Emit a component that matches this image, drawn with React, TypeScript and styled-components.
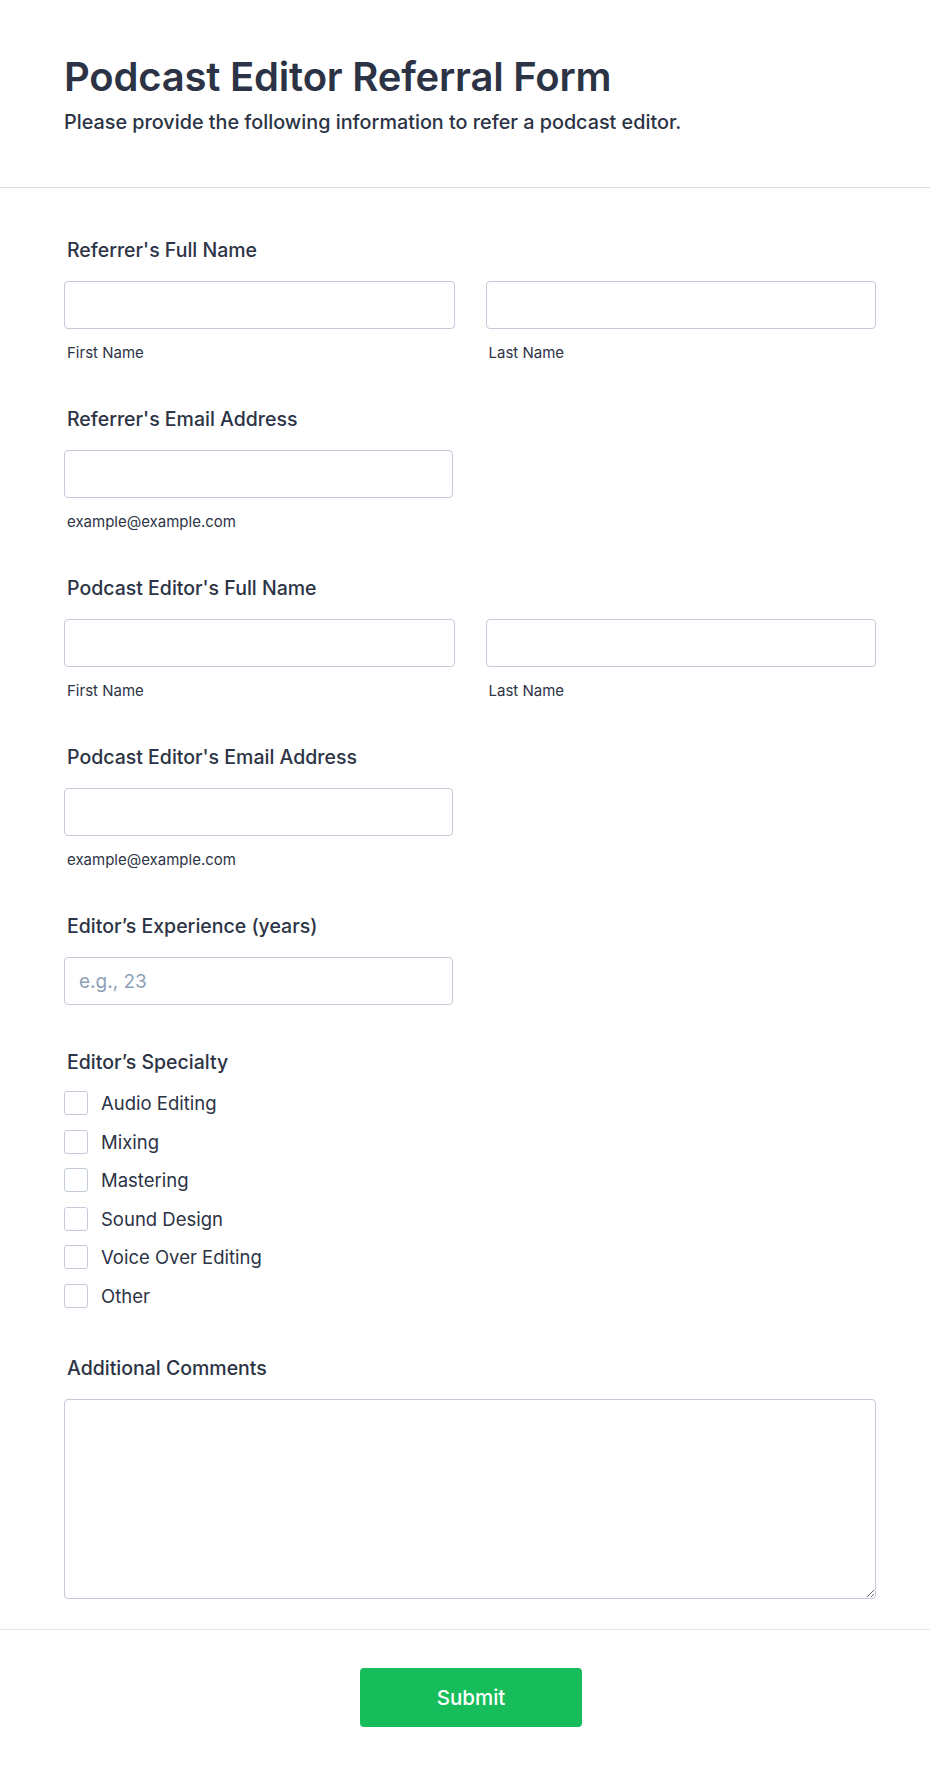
import styled, { createGlobalStyle } from "styled-components";

const GlobalStyle = createGlobalStyle`
	html, body {
		margin: 0;
		padding: 0;
		background: #ffffff;
	}
	body {
		font-family: "Inter", "Noto Sans", sans-serif;
		color: #2c3345;
	}
	* {
		box-sizing: border-box;
	}
`;

const specialties = [
	"Audio Editing",
	"Mixing",
	"Mastering",
	"Sound Design",
	"Voice Over Editing",
	"Other"
];

function App() {
	return (
		<>
			<GlobalStyle />
			<Page>
				<Header>
					<Title>Podcast Editor Referral Form</Title>
					<Subtitle>
						Please provide the following information to refer a podcast editor.
					</Subtitle>
				</Header>

				<Form>
					<Field>
						<Label>Referrer's Full Name</Label>
						<TwoCols>
							<div>
								<Input type="text" />
								<SubLabel>First Name</SubLabel>
							</div>
							<div>
								<Input type="text" />
								<SubLabel>Last Name</SubLabel>
							</div>
						</TwoCols>
					</Field>

					<Field>
						<Label>Referrer's Email Address</Label>
						<HalfBox>
							<Input type="email" />
							<SubLabel>example@example.com</SubLabel>
						</HalfBox>
					</Field>

					<Field>
						<Label>Podcast Editor's Full Name</Label>
						<TwoCols>
							<div>
								<Input type="text" />
								<SubLabel>First Name</SubLabel>
							</div>
							<div>
								<Input type="text" />
								<SubLabel>Last Name</SubLabel>
							</div>
						</TwoCols>
					</Field>

					<Field>
						<Label>Podcast Editor's Email Address</Label>
						<HalfBox>
							<Input type="email" />
							<SubLabel>example@example.com</SubLabel>
						</HalfBox>
					</Field>

					<Field>
						<Label>Editor’s Experience (years)</Label>
						<HalfBox>
							<Input type="text" placeholder="e.g., 23" />
						</HalfBox>
					</Field>

					<Field>
						<Label $gap={17}>Editor’s Specialty</Label>
						<OptionList>
							{specialties.map(item => (
								<Option key={item}>
									<Box type="checkbox" />
									<span>{item}</span>
								</Option>
							))}
						</OptionList>
					</Field>

					<Field>
						<Label>Additional Comments</Label>
						<TextArea />
					</Field>
				</Form>

				<Footer>
					<SubmitButton type="button">Submit</SubmitButton>
				</Footer>
			</Page>
		</>
	);
}

const Page = styled.div`
	width: 930px;
	min-height: 1777px;
	background: #ffffff;
`;

const Header = styled.header`
	padding: 53px 56px 53px 64px;
	border-bottom: 1px solid #dcdce6;
`;

const Title = styled.h1`
	margin: 0 0 9px;
	font-size: 40px;
	font-weight: 600;
	line-height: 48px;
	letter-spacing: -0.2px;
	color: #2c3345;
`;

const Subtitle = styled.p`
	margin: 0;
	font-size: 19.8px;
	font-weight: 500;
	line-height: 24px;
	color: #2c3345;
`;

const Form = styled.div`
	display: flex;
	flex-direction: column;
	gap: 46px;
	padding: 51px 54px 30px 64px;
	border-bottom: 1px solid #e6e6ee;
`;

const Field = styled.div`
	display: flex;
	flex-direction: column;
`;

const Label = styled.label<{ $gap?: number }>`
	display: block;
	padding-left: 3px;
	margin-bottom: ${props => props.$gap ?? 19}px;
	font-size: 19.5px;
	font-weight: 500;
	line-height: 23px;
	color: #2c3345;
`;

const TwoCols = styled.div`
	display: grid;
	grid-template-columns: 1fr 1fr;
	column-gap: 31px;
`;

const HalfBox = styled.div`
	width: 389px;
`;

const Input = styled.input`
	display: block;
	width: 100%;
	height: 48px;
	padding: 0 14px;
	border: 1px solid #c3cad8;
	border-radius: 4px;
	background: #ffffff;
	font-family: "Inter", sans-serif;
	font-size: 19px;
	color: #2c3345;
	outline: none;

	&::placeholder {
		color: #8c9fb8;
	}
`;

const SubLabel = styled.div`
	margin-top: 15px;
	padding-left: 3px;
	font-size: 15px;
	line-height: 18px;
	color: #2c3345;
`;

const OptionList = styled.div`
	display: flex;
	flex-direction: column;
	gap: 14.5px;
	padding-bottom: 3px;
`;

const Option = styled.label`
	display: flex;
	align-items: center;
	gap: 13px;
	height: 24px;
	font-size: 18.5px;
	color: #2c3345;
`;

const Box = styled.input`
	appearance: none;
	margin: 0;
	width: 24px;
	height: 24px;
	border: 1px solid #c3cad8;
	border-radius: 3px;
	background: #ffffff;
`;

const TextArea = styled.textarea`
	display: block;
	width: 100%;
	height: 200px;
	padding: 12px 14px;
	border: 1px solid #c3cad8;
	border-radius: 4px;
	font-family: "Inter", sans-serif;
	font-size: 16px;
	resize: vertical;
	outline: none;
`;

const Footer = styled.div`
	display: flex;
	justify-content: center;
	padding: 38px 52px 50px 64px;
`;

const SubmitButton = styled.button`
	width: 222px;
	height: 59px;
	border: none;
	border-radius: 4px;
	background: #18bd5b;
	color: #ffffff;
	font-family: "Inter", sans-serif;
	font-size: 20.5px;
	font-weight: 500;
	cursor: pointer;
`;

export default App;
